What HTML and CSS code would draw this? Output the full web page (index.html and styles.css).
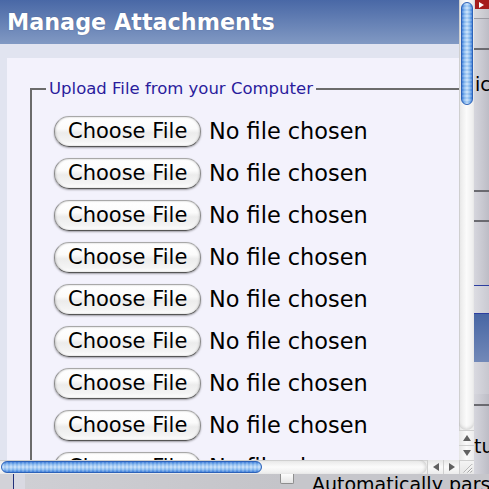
FILE: index.html
```html
<!DOCTYPE html>
<html>
<head>
<meta charset="utf-8">
<link rel="stylesheet" href="styles.css">
</head>
<body>
<div class="desktop">
  <div class="bgpage">
    <div class="cell-empty"></div>
    <div class="side">
      <div class="s-red"><span class="s-tri"></span></div>
      <div class="s-a"></div>
      <div class="s-line-light"></div>
      <div class="s-b"></div>
      <div class="s-line-dark"></div>
      <div class="s-c"><span class="s-text s-ic">ic</span></div>
      <div class="s-line-dark"></div>
      <div class="s-d"></div>
      <div class="s-line-dark"></div>
      <div class="s-e"></div>
      <div class="s-line-blue"></div>
      <div class="s-f"></div>
      <div class="s-line-blue"></div>
      <div class="s-blue"></div>
      <div class="s-g"></div>
      <div class="s-h"></div>
      <div class="s-line-dark"></div>
      <div class="s-i"><span class="s-text s-tu">tu</span></div>
    </div>
    <div class="bottom">
      <div class="b-left"></div>
      <div class="b-vline"></div>
      <div class="b-light"></div>
      <div class="b-mid"></div>
      <div class="b-check"></div>
      <div class="b-text">Automatically parse</div>
    </div>
  </div>

  <div class="popup">
    <div class="viewport">
      <div class="page">
        <div class="header"><h1 class="title">Manage Attachments</h1></div>
        <div class="band">
          <div class="panel">
            <fieldset class="upload">
              <legend class="legend">Upload File from your Computer</legend>
              <div class="row"><span class="btn">Choose File</span><span class="nofile">No file chosen</span></div>
              <div class="row"><span class="btn">Choose File</span><span class="nofile">No file chosen</span></div>
              <div class="row"><span class="btn">Choose File</span><span class="nofile">No file chosen</span></div>
              <div class="row"><span class="btn">Choose File</span><span class="nofile">No file chosen</span></div>
              <div class="row"><span class="btn">Choose File</span><span class="nofile">No file chosen</span></div>
              <div class="row"><span class="btn">Choose File</span><span class="nofile">No file chosen</span></div>
              <div class="row"><span class="btn">Choose File</span><span class="nofile">No file chosen</span></div>
              <div class="row"><span class="btn">Choose File</span><span class="nofile">No file chosen</span></div>
              <div class="row"><span class="btn">Choose File</span><span class="nofile">No file chosen</span></div>
              <div class="row"><span class="btn">Choose File</span><span class="nofile">No file chosen</span></div>
            </fieldset>
          </div>
        </div>
      </div>
    </div>
    <div class="vscroll">
      <div class="vtrack"><div class="vthumb"></div></div>
      <div class="varrow"><span class="tri-up"></span></div>
      <div class="varrow"><span class="tri-down"></span></div>
    </div>
    <div class="hscroll">
      <div class="htrack"><div class="hthumb"></div></div>
      <div class="harrow"><span class="tri-left"></span></div>
      <div class="harrow"><span class="tri-right"></span></div>
    </div>
    <div class="corner">
      <svg width="15" height="14" viewBox="0 0 15 14">
        <path d="M4 13 L13 4 M8 13 L13 8 M11 13 L13 11" stroke="#9a9a9a" stroke-width="1" fill="none"/>
        <path d="M5 13 L13 5 M9 13 L13 9" stroke="#ffffff" stroke-width="1" fill="none"/>
      </svg>
    </div>
  </div>
</div>
</body>
</html>
```

FILE: styles.css
```css
html, body {
  margin: 0;
  padding: 0;
}
body {
  width: 489px;
  height: 489px;
  overflow: hidden;
  font-family: "DejaVu Sans", Verdana, sans-serif;
}
.desktop {
  position: relative;
  width: 489px;
  height: 489px;
}

/* background page */
.bgpage {
  display: grid;
  grid-template-columns: 474px 15px;
  grid-template-rows: 474px 15px;
  width: 489px;
  height: 489px;
  background: #c9c9d0;
}
.side {
  display: flex;
  flex-direction: column;
  background: linear-gradient(to right, #d6d6dd, #bdbdc6);
  overflow: hidden;
}
.s-red { height: 9px; background: #a51c1c; margin-left: 1px; display: flex; align-items: center; padding-left: 4px; }
.s-tri { width: 0; height: 0; border-left: 5px solid #fff; border-top: 3px solid transparent; border-bottom: 3px solid transparent; }
.s-a { height: 9px; background: linear-gradient(to right, #dadade, #c4c4cb); }
.s-line-light { height: 1px; background: #9b9ba2; }
.s-b { height: 29px; }
.s-line-dark { height: 2px; background: #6a6a70; flex: none; }
.s-c { height: 140px; position: relative; }
.s-d { height: 28px; }
.s-e { height: 63px; }
.s-line-blue { height: 1px; background: #2c3ea0; flex: none; }
.s-f { height: 27px; background: linear-gradient(to right, #dcdce2, #cacad2); }
.s-blue { height: 48px; background: linear-gradient(#4866a4, #7289b8); }
.s-g { height: 32px; background: linear-gradient(to right, #d9d9e0, #c7c7cf); }
.s-h { height: 10px; }
.s-i { height: 65px; }
.s-text {
  display: block;
  font-size: 19px;
  color: #000;
  line-height: 1;
  white-space: nowrap;
}
.s-ic { padding-top: 25px; margin-left: 1px; }
.s-tu { padding-top: 31px; }

.bottom {
  grid-column: 1 / 3;
  display: flex;
  align-items: flex-start;
  background: #c6c6cb;
  overflow: hidden;
  position: relative;
}
.b-left { width: 13px; height: 15px; background: #d2d2d8; flex: none; }
.b-vline { width: 1px; height: 15px; background: #23307a; flex: none; }
.b-light { width: 11px; height: 15px; background: #d9d9e2; flex: none; }
.b-mid { width: 255px; height: 15px; background: linear-gradient(to right, #cfcfd4, #c4c4c9); flex: none; }
.b-check {
  width: 12px; height: 9px; margin-top: 0; flex: none;
  background: linear-gradient(#fdfdfd, #e4e4e4);
  border: 1px solid #8e8e8e; border-top: none;
  border-radius: 0 0 2px 2px;
}
.b-text {
  margin-left: 18px;
  font-size: 19px;
  line-height: 19px;
  padding-top: 1px;
  color: #000;
  white-space: nowrap;
}

/* popup window */
.popup {
  position: absolute;
  left: 0;
  top: 0;
  width: 474px;
  height: 474px;
  display: grid;
  grid-template-columns: 459px 15px;
  grid-template-rows: 460px 14px;
}
.viewport {
  overflow: hidden;
  background: #e1e4f0;
}
.page {
  width: 760px;
}
.header {
  height: 44px;
  background: linear-gradient(#4968a6, #8199c3);
  box-sizing: border-box;
  padding-left: 7px;
  padding-top: 2px;
}
.title {
  margin: 0;
  font-family: "DejaVu Sans", Verdana, sans-serif;
  font-weight: bold;
  font-size: 22.3px;
  line-height: 40px;
  color: #fff;
  text-shadow: 0 0 1px rgba(40, 50, 90, 0.6);
  white-space: nowrap;
}
.band {
  padding: 14px 0 0 7px;
  background: #e1e4f0;
}
.panel {
  background: #f3f2fc;
  padding: 21px 0 0 23px;
  height: 500px;
}
.upload {
  margin: 0;
  width: 600px;
  border: 2px solid #6b6b6b;
  border-right: none;
  border-bottom: none;
  padding: 12px 0 0 14px;
}
.legend {
  font-size: 16.5px;
  line-height: 19px;
  color: #2a1c9c;
  padding: 0 3px;
  white-space: nowrap;
}
.row {
  display: flex;
  align-items: center;
  height: 42px;
  margin-left: 8px;
}
.btn {
  box-sizing: border-box;
  width: 147px;
  height: 31px;
  border-radius: 15px;
  border: 1px solid #8c8c8c;
  border-top-color: #a8a8a8;
  border-bottom-color: #555;
  background: linear-gradient(#ffffff 0%, #fbfbfb 40%, #ececec 55%, #f4f4f4 85%, #ffffff 100%);
  box-shadow: 0 1px 2px rgba(0, 0, 0, 0.35), inset 1px 0 2px rgba(0,0,0,0.15), inset -1px 0 2px rgba(0,0,0,0.12);
  font-size: 21px;
  line-height: 29px;
  padding-left: 13px;
  color: #000;
  white-space: nowrap;
  flex: none;
}
.nofile {
  margin-left: 8px;
  font-size: 22.4px;
  color: #000;
  white-space: nowrap;
}

/* scrollbars */
.vscroll {
  display: flex;
  flex-direction: column;
  background: linear-gradient(to right, #bdbdbd 0, #e9e9e9 1px, #fbfbfb 50%, #ececec 100%);
}
.vtrack {
  flex: 1;
  padding: 2px 1px 0 2px;
  border-radius: 0 0 7px 7px;
  box-shadow: inset 0 -3px 3px -1px rgba(0,0,0,0.12);
}
.vthumb {
  height: 103px;
  border-radius: 6px;
  border: 1px solid #2d62b8;
  box-sizing: border-box;
  background:
    repeating-linear-gradient(rgba(255,255,255,0.15) 0 2px, rgba(80,140,220,0.15) 2px 4px),
    linear-gradient(to right, #3a7bd8 0%, #8bbcf0 25%, #c6e0fa 50%, #8cbdf0 75%, #3a7bd8 100%);
}
.varrow {
  height: 14px;
  display: flex;
  align-items: center;
  justify-content: center;
  border-top: 1px solid #cfcfcf;
  background: linear-gradient(to right, #e6e6e6, #fafafa 50%, #ececec);
}
.tri-up { width: 0; height: 0; border-bottom: 6px solid #606060; border-left: 4px solid transparent; border-right: 4px solid transparent; }
.tri-down { width: 0; height: 0; border-top: 6px solid #606060; border-left: 4px solid transparent; border-right: 4px solid transparent; }
.hscroll {
  display: flex;
  background: linear-gradient(#bdbdbd 0, #e9e9e9 1px, #fbfbfb 50%, #ececec 100%);
}
.htrack {
  flex: 1;
  padding: 1px 0 1px 1px;
  border-radius: 0 7px 7px 0;
  box-shadow: inset -3px 0 3px -1px rgba(0,0,0,0.12);
}
.hthumb {
  width: 261px;
  height: 12px;
  border-radius: 6px;
  border: 1px solid #2d62b8;
  box-sizing: border-box;
  background:
    repeating-linear-gradient(to right, rgba(255,255,255,0.15) 0 2px, rgba(80,140,220,0.15) 2px 4px),
    linear-gradient(#3a7bd8 0%, #8bbcf0 25%, #c6e0fa 50%, #8cbdf0 75%, #3a7bd8 100%);
}
.harrow {
  width: 15px;
  display: flex;
  align-items: center;
  justify-content: center;
  border-left: 1px solid #cfcfcf;
  background: linear-gradient(#e6e6e6, #fafafa 50%, #ececec);
}
.tri-left { width: 0; height: 0; border-right: 6px solid #606060; border-top: 4px solid transparent; border-bottom: 4px solid transparent; }
.tri-right { width: 0; height: 0; border-left: 6px solid #606060; border-top: 4px solid transparent; border-bottom: 4px solid transparent; }
.corner {
  background: linear-gradient(#f4f4f4, #e6e6e6);
  border-left: 1px solid #cfcfcf;
  border-top: 1px solid #cfcfcf;
  box-sizing: border-box;
  display: flex;
  align-items: flex-end;
  justify-content: flex-end;
}
.corner svg { display: block; }
```
